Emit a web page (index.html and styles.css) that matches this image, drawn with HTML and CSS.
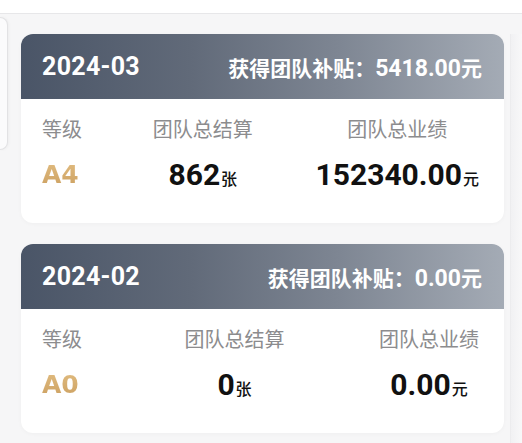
FILE: index.html
```html
<!DOCTYPE html>
<html lang="zh-CN">
<head>
<meta charset="utf-8">
<title>团队补贴</title>
<link rel="stylesheet" href="styles.css">
</head>
<body>
<div class="topbar"></div>
<div class="stage">
  <div class="peek-left"></div>
  <div class="list">
    <div class="card">
      <div class="card-head">
        <span class="month">2024-03</span>
        <span class="subsidy">获得团队补贴：<span class="num">5418.00</span>元</span>
      </div>
      <div class="card-body">
        <div class="col col-first">
          <div class="label">等级</div>
          <div class="value level">A4</div>
        </div>
        <div class="col">
          <div class="label">团队总结算</div>
          <div class="value"><span class="num">862</span><span class="unit">张</span></div>
        </div>
        <div class="col">
          <div class="label">团队总业绩</div>
          <div class="value"><span class="num">152340.00</span><span class="unit">元</span></div>
        </div>
      </div>
    </div>
    <div class="card">
      <div class="card-head">
        <span class="month">2024-02</span>
        <span class="subsidy">获得团队补贴：<span class="num">0.00</span>元</span>
      </div>
      <div class="card-body">
        <div class="col col-first">
          <div class="label">等级</div>
          <div class="value level">A0</div>
        </div>
        <div class="col">
          <div class="label">团队总结算</div>
          <div class="value"><span class="num">0</span><span class="unit">张</span></div>
        </div>
        <div class="col">
          <div class="label">团队总业绩</div>
          <div class="value"><span class="num">0.00</span><span class="unit">元</span></div>
        </div>
      </div>
    </div>
  </div>
  <div class="peek-right"></div>
</div>
</body>
</html>
```

FILE: styles.css
```css
* { box-sizing: border-box; }
html, body { margin: 0; padding: 0; }
body {
  width: 522px;
  height: 443px;
  overflow: hidden;
  background: #f6f6f7;
  font-family: "Noto Sans CJK SC", "Noto Sans", sans-serif;
}
.topbar {
  height: 14px;
  background: #ffffff;
  border-bottom: 1px solid #e7e7e9;
}
.stage {
  display: flex;
  align-items: flex-start;
}
.peek-left {
  width: 8px;
  height: 133px;
  margin-top: 3px;
  background: #fbfbfc;
  border: 1px solid #e2e2e4;
  border-left: none;
  border-radius: 0 8px 8px 0;
  box-shadow: 1px 0 3px rgba(0,0,0,0.04);
}
.list {
  margin-left: 13px;
  margin-top: 20px;
  width: 483px;
  display: flex;
  flex-direction: column;
  gap: 21px;
}
.peek-right {
  margin-left: 6px;
  margin-top: 20px;
  width: 12px;
  height: 420px;
  background: linear-gradient(90deg, #f1f1f3, #f8f8f9);
  border-left: 1px solid #ececee;
}
.card {
  background: #ffffff;
  border-radius: 12px;
  overflow: hidden;
  box-shadow: 0 1px 4px rgba(0,0,0,0.03);
}
.card-head {
  height: 65px;
  padding: 0 22px 0 21px;
  display: flex;
  align-items: center;
  justify-content: space-between;
  color: #ffffff;
  background: linear-gradient(90deg, #4a5567 0%, #616a79 35%, #7d8592 65%, #a4abb5 100%);
}
.month {
  font-family: Roboto, "Noto Sans CJK SC", sans-serif;
  font-weight: 700;
  font-size: 25px;
  letter-spacing: 0.3px;
}
.subsidy {
  font-weight: 700;
  font-size: 21px;
}
.subsidy .num {
  font-family: Roboto, "Noto Sans CJK SC", sans-serif;
  font-size: 23px;
}
.card-body {
  display: flex;
  justify-content: space-between;
  padding: 17px 25px 30px 21px;
}
.col {
  display: flex;
  flex-direction: column;
  align-items: center;
  gap: 15px;
}
.col-first { align-items: flex-start; margin-right: 8px; }
.label {
  font-size: 20px;
  line-height: 26px;
  color: #8c8c8e;
  white-space: nowrap;
}
.value {
  height: 36px;
  line-height: 36px;
  white-space: nowrap;
  color: #111111;
  font-weight: 700;
}
.value .num {
  font-family: Roboto, "Noto Sans CJK SC", sans-serif;
  font-size: 30px;
}
.value .unit {
  font-size: 16px;
  font-weight: 500;
  margin-left: 1px;
}
.level {
  font-family: "DejaVu Sans", Roboto, sans-serif;
  font-size: 25px;
  background: linear-gradient(180deg, #e4c085 0%, #c89b5b 100%);
  -webkit-background-clip: text;
  background-clip: text;
  color: transparent;
}
```
